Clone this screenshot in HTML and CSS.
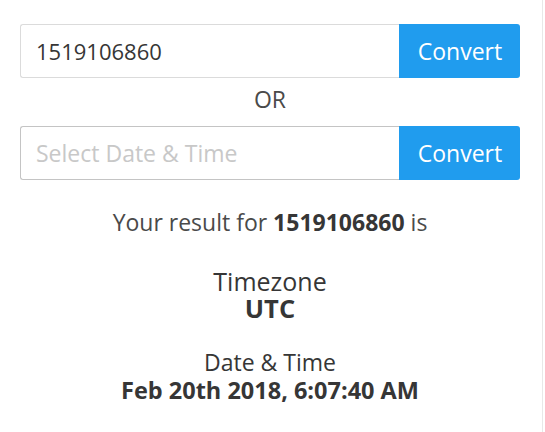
FILE: index.html
```html
<!DOCTYPE html>
<html>
<head>
<meta charset="utf-8">
<link rel="stylesheet" href="styles.css">
</head>
<body>
<div class="page">
  <div class="group">
    <div class="field">1519106860</div>
    <button class="btn">Convert</button>
  </div>
  <div class="or">OR</div>
  <div class="group">
    <div class="field field-alt placeholder">Select Date &amp; Time</div>
    <button class="btn">Convert</button>
  </div>
  <p class="result">Your result for <b>1519106860</b> is</p>
  <div class="block block-tz">
    <div class="label">Timezone</div>
    <div class="value">UTC</div>
  </div>
  <div class="block block-dt">
    <div class="label">Date &amp; Time</div>
    <div class="value">Feb 20th 2018, 6:07:40 AM</div>
  </div>
</div>
</body>
</html>
```

FILE: styles.css
```css
html, body {
  margin: 0;
  padding: 0;
  background: #fff;
}
body {
  font-family: "Open Sans", "Noto Sans", sans-serif;
  color: #363636;
}
.page {
  width: 543px;
  min-height: 432px;
  box-sizing: border-box;
  border-right: 1px solid #e8e8e8;
  padding: 24px 0 0 20px;
}
.group {
  display: flex;
  width: 500px;
  height: 54px;
}
.field {
  flex: 1;
  box-sizing: border-box;
  border: 1px solid #dbdbdb;
  border-right: none;
  border-radius: 3px 0 0 3px;
  display: flex;
  align-items: center;
  padding-left: 15px;
  font-size: 22px;
  color: #363636;
}
.field-alt {
  border-color: #c4c4c4;
}
.placeholder {
  color: #c8c8c8;
  font-size: 23px;
}
.btn {
  width: 121px;
  border: none;
  margin: 0;
  background: #209cee;
  color: #fff;
  font-family: inherit;
  font-size: 23px;
  border-radius: 0 3px 3px 0;
  padding: 0 0 0 1px;
}
.or {
  width: 500px;
  text-align: center;
  font-size: 23px;
  line-height: 42px;
  margin-bottom: 6px;
  color: #4a4a4a;
}
.result {
  width: 500px;
  margin: 27px 0 0;
  text-align: center;
  font-size: 23px;
  line-height: 30px;
  color: #4a4a4a;
}
.result b {
  color: #363636;
}
.block {
  width: 500px;
  text-align: center;
  line-height: 27px;
}
.block-tz {
  margin-top: 31px;
  font-size: 25px;
}
.block-dt {
  margin-top: 27px;
  font-size: 23px;
}
.label {
  color: #363636;
}
.value {
  font-weight: 700;
  color: #363636;
}
.block-tz .value {
  font-size: 25.5px;
}
.block-dt .value {
  font-size: 23.5px;
  margin-top: 1px;
}
```
